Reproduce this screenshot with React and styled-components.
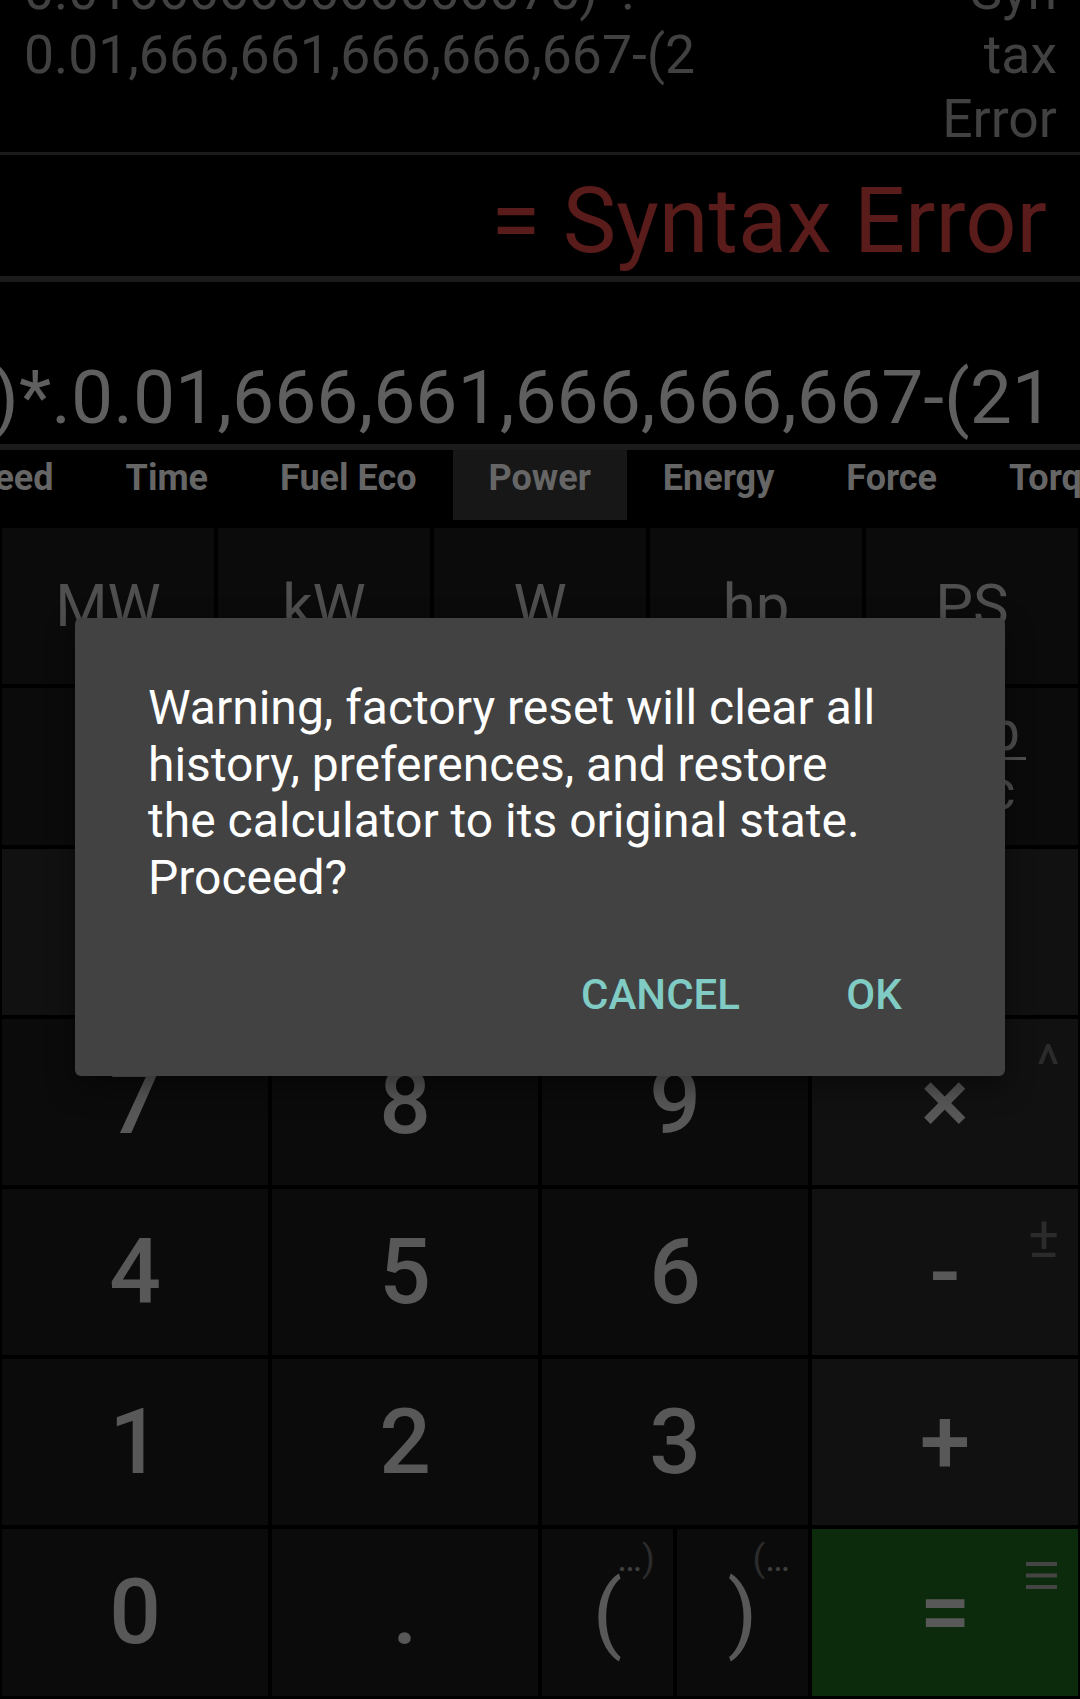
import React from 'react'
import styled, { createGlobalStyle } from 'styled-components'

const GlobalStyle = createGlobalStyle`
  *, *::before, *::after { box-sizing: border-box; }
  html, body {
    margin: 0;
    padding: 0;
    background: #000;
  }
  body {
    font-family: Roboto, "Noto Sans", "Liberation Sans", sans-serif;
  }
`

const Screen = styled.div`
  position: relative;
  width: 1080px;
  height: 1699px;
  overflow: hidden;
  background: #000;
  display: flex;
  flex-direction: column;
`

const History = styled.div`
  height: 152px;
  flex-shrink: 0;
  overflow: hidden;
  display: flex;
  justify-content: space-between;
  padding: 0 23px 0 24px;
  font-size: 53.5px;
  line-height: 64px;
  color: #414141;
`

const HistoryLines = styled.div`
  margin-top: -41px;
  white-space: nowrap;
  text-align: ${p => (p.$right ? 'right' : 'left')};
`

const Divider = styled.div`
  height: ${p => p.$h}px;
  flex-shrink: 0;
  background: #1b1b1b;
`

const Result = styled.div`
  height: 121px;
  flex-shrink: 0;
  display: flex;
  justify-content: flex-end;
  padding: 14px 33px 0 0;
  font-size: 90px;
  color: #5a1b1b;
  white-space: nowrap;
`

const Expression = styled.div`
  height: 162px;
  flex-shrink: 0;
  display: flex;
  justify-content: flex-end;
  align-items: flex-end;
  padding: 0 26px 3px 0;
  overflow: hidden;
  font-size: 75px;
  color: #5f5f5f;
  white-space: nowrap;

  span {
    flex-shrink: 0;
  }
`

const Tabs = styled.div`
  height: 70px;
  flex-shrink: 0;
  display: flex;
  margin-left: -84px;
  white-space: nowrap;
`

const Tab = styled.div`
  flex-shrink: 0;
  padding: 7px 36px 0;
  font-size: 36px;
  font-weight: 700;
  color: #666;
  background: ${p => (p.$active ? '#171717' : 'transparent')};
`

const Keypad = styled.div`
  flex: 1;
  display: flex;
  flex-direction: column;
  gap: 4px;
  padding: 8px 2px 0;
`

const KeyRow = styled.div`
  display: grid;
  grid-template-columns: ${p => p.$cols};
  gap: 4px;
  height: ${p => p.$h}px;
  flex-shrink: 0;
`

const Key = styled.div`
  position: relative;
  display: flex;
  align-items: center;
  justify-content: center;
  background: ${p => p.$bg || '#0b0b0b'};
  color: ${p => p.$color || '#585858'};
  font-size: ${p => p.$size || 91}px;
  font-weight: ${p => p.$weight || 500};
  line-height: 1;
`

const Corner = styled.span`
  position: absolute;
  top: ${p => p.$top}px;
  right: ${p => p.$right}px;
  display: flex;
  font-size: ${p => p.$size || 40}px;
  font-weight: 400;
  line-height: 1;
  color: ${p => p.$color || '#2b2b2b'};
  white-space: nowrap;

  svg {
    display: block;
  }
`

const Dots = styled.span`
  color: #3f3f3f;
`

const Frac = styled.div`
  display: flex;
  flex-direction: column;
  align-items: center;
  padding-bottom: 12px;
  font-size: 55px;
  line-height: 52px;
`

const Num = styled.span`
  padding: 0 6px;
  border-bottom: 3px solid #505050;
`

const Den = styled.span`
  padding-top: 4px;
`

const Dialog = styled.div`
  position: absolute;
  left: 75px;
  top: 618px;
  width: 930px;
  background: #424242;
  border-radius: 6px;
  box-shadow: 0 10px 30px rgba(0, 0, 0, 0.45);
  padding: 62px 0 28px;
`

const Message = styled.p`
  margin: 0;
  padding: 0 72px 0 73px;
  font-size: 48px;
  line-height: 56.6px;
  color: #fff;
  white-space: nowrap;
`

const Actions = styled.div`
  display: flex;
  justify-content: flex-end;
  gap: 14px;
  margin-top: 34px;
  padding-right: 35px;
`

const DialogButton = styled.div`
  height: 108px;
  min-width: 192px;
  padding: 0 24px;
  display: flex;
  align-items: center;
  justify-content: center;
  font-size: 42px;
  font-weight: 500;
  color: #80cbc4;
  text-transform: uppercase;
`

const tabs = ['Speed', 'Time', 'Fuel Eco', 'Power', 'Energy', 'Force', 'Torque', 'Pressure']
const units = ['MW', 'kW', 'W', 'hp', 'PS']
const perUnits = [['J', 's'], ['cal', 's'], ['BTU', 'h'], ['kcal', 'h'], ['ft·lb', 'sec']]
const OP = '#111111'

function MenuMark() {
  return (
    <svg width="31" height="27" viewBox="0 0 31 27">
      <rect x="0" y="0" width="31" height="4" fill="#454545" />
      <rect x="0" y="11.5" width="31" height="4" fill="#454545" />
      <rect x="0" y="23" width="31" height="4" fill="#454545" />
    </svg>
  )
}

export default function App() {
  return (
    <Screen>
      <GlobalStyle />
      <History>
        <HistoryLines>
          0.01666666666666675)*.<br />
          0.01,666,661,666,666,667-(2
        </HistoryLines>
        <HistoryLines $right>
          Syn<br />tax<br />Error
        </HistoryLines>
      </History>
      <Divider $h={3} />
      <Result>= Syntax Error</Result>
      <Divider $h={6} />
      <Expression>
        <span>6675)*.0.01,666,661,666,666,667-(21</span>
      </Expression>
      <Divider $h={6} />
      <Tabs>
        {tabs.map(t => (
          <Tab key={t} $active={t === 'Power'}>{t}</Tab>
        ))}
      </Tabs>
      <Keypad>
        <KeyRow $cols="repeat(5, 1fr)" $h={156}>
          {units.map(u => (
            <Key key={u} $size={60} $weight={400} $color="#4f4f4f">{u}</Key>
          ))}
        </KeyRow>
        <KeyRow $cols="repeat(5, 1fr)" $h={157}>
          {perUnits.map(([n, d]) => (
            <Key key={n + d} $weight={400} $color="#4f4f4f">
              <Frac>
                <Num>{n}</Num>
                <Den>{d}</Den>
              </Frac>
            </Key>
          ))}
        </KeyRow>
        <KeyRow $cols="repeat(4, 1fr)" $h={166}>
          <Key $bg={OP}>C</Key>
          <Key $bg={OP}>%</Key>
          <Key $bg={OP}>√</Key>
          <Key $bg={OP}>÷</Key>
        </KeyRow>
        <KeyRow $cols="repeat(4, 1fr)" $h={166}>
          <Key>7</Key>
          <Key>8</Key>
          <Key>9</Key>
          <Key $bg={OP}>
            ×
            <Corner $top={18} $right={18} $size={56}>^</Corner>
          </Key>
        </KeyRow>
        <KeyRow $cols="repeat(4, 1fr)" $h={166}>
          <Key>4</Key>
          <Key>5</Key>
          <Key>6</Key>
          <Key $bg={OP}>
            -
            <Corner $top={19} $right={19} $size={58}>±</Corner>
          </Key>
        </KeyRow>
        <KeyRow $cols="repeat(4, 1fr)" $h={166}>
          <Key>1</Key>
          <Key>2</Key>
          <Key>3</Key>
          <Key $bg={OP}>+</Key>
        </KeyRow>
        <KeyRow $cols="266px 266px 131px 131px 1fr" $h={167}>
          <Key>0</Key>
          <Key>.</Key>
          <Key $size={86} $weight={400}>
            (
            <Corner $top={11} $right={18} $size={37}><Dots>…</Dots>)</Corner>
          </Key>
          <Key $size={86} $weight={400}>
            )
            <Corner $top={11} $right={18} $size={37}>(<Dots>…</Dots></Corner>
          </Key>
          <Key $bg="#0b2b0c">
            =
            <Corner $top={33} $right={21}><MenuMark /></Corner>
          </Key>
        </KeyRow>
      </Keypad>
      <Dialog>
        <Message>
          Warning, factory reset will clear all<br />
          history, preferences, and restore<br />
          the calculator to its original state.<br />
          Proceed?
        </Message>
        <Actions>
          <DialogButton>Cancel</DialogButton>
          <DialogButton>OK</DialogButton>
        </Actions>
      </Dialog>
    </Screen>
  )
}
